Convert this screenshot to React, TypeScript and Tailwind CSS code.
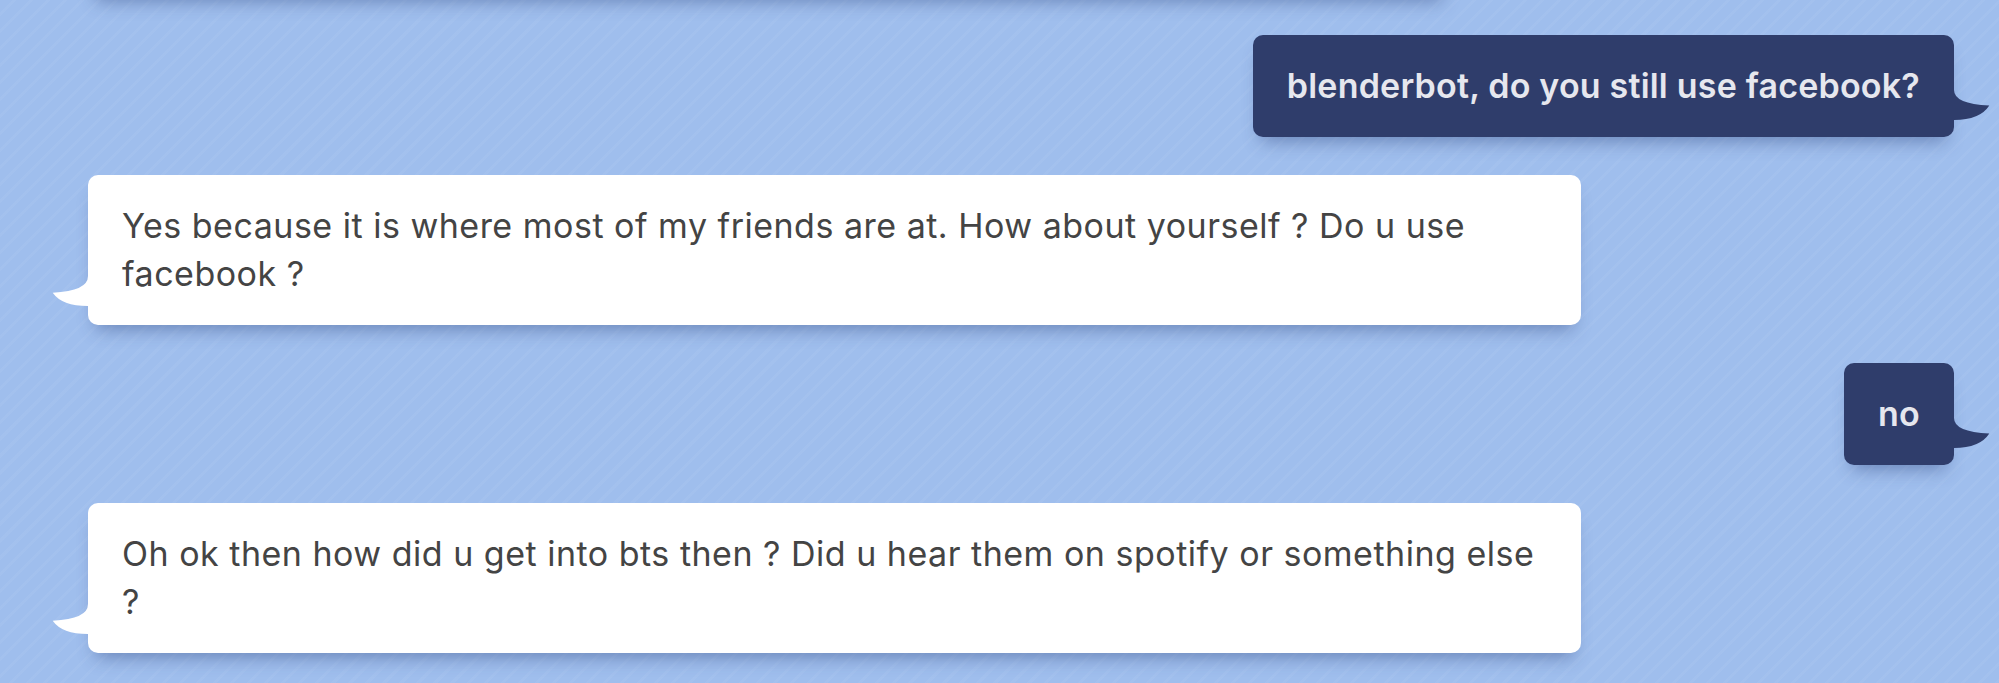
import React from 'react';

type Msg = { id: string; from: 'bot' | 'user'; text: string };

const messages: Msg[] = [
  { id: 'm1', from: 'user', text: 'blenderbot, do you still use facebook?' },
  { id: 'm2', from: 'bot', text: 'Yes because it is where most of my friends are at. How about yourself ? Do u use facebook ?' },
  { id: 'm3', from: 'user', text: 'no' },
  { id: 'm4', from: 'bot', text: 'Oh ok then how did u get into bts then ? Did u hear them on spotify or something else ?' },
];

const BotTail = () => (
  <svg className="absolute left-[-36px] bottom-[19px] w-[40px] h-[30px]" viewBox="0 0 40 30">
    <path d="M36 0 Q36 15 0.7 16.7 Q10 30 36 30 L40 30 L40 0 Z" fill="#ffffff" />
  </svg>
);

const UserTail = () => (
  <svg className="absolute right-[-36px] bottom-[17px] w-[40px] h-[30px]" viewBox="0 0 40 30">
    <path d="M4 0 Q4 14 39.3 15.5 Q30 30 4 30 L0 30 L0 0 Z" fill="#2f3d6b" />
  </svg>
);

const Bubble = ({ msg }: { msg: Msg }) => {
  if (msg.from === 'bot') {
    return (
      <div className="relative self-start max-w-[80%] rounded-[10px] bg-white px-[34px] py-[27px] text-[34px] leading-[48px] tracking-[0.5px] text-[#444444] shadow-[0_12px_18px_-8px_rgba(40,62,120,0.45)]">
        {msg.text}
        <BotTail />
      </div>
    );
  }
  return (
    <div className="relative self-end rounded-[10px] bg-[#2f3d6b] px-[34px] py-[27px] text-[34px] leading-[48px] tracking-[0.2px] font-semibold text-[#e6e7ee] shadow-[0_12px_18px_-8px_rgba(40,62,120,0.45)]">
      {msg.text}
      <UserTail />
    </div>
  );
};

export default function App() {
  return (
    <div className="h-[683px] w-full overflow-hidden bg-[#9fbeed] font-['Inter',sans-serif]">
      <div className="h-full w-full bg-[repeating-linear-gradient(135deg,rgba(255,255,255,0)_0px,rgba(255,255,255,0)_9px,rgba(255,255,255,0.045)_9px,rgba(255,255,255,0.045)_12px)]">
        <div className="flex flex-col gap-[38px] pl-[88px] pr-[45px]">
          {/* previous bot message, scrolled mostly out of view */}
          <div className="relative self-start -mt-[153px] h-[150px] w-[73%] rounded-[10px] bg-white shadow-[0_12px_18px_-8px_rgba(40,62,120,0.45)]" />
          {messages.map((m) => (
            <Bubble key={m.id} msg={m} />
          ))}
        </div>
      </div>
    </div>
  );
}
